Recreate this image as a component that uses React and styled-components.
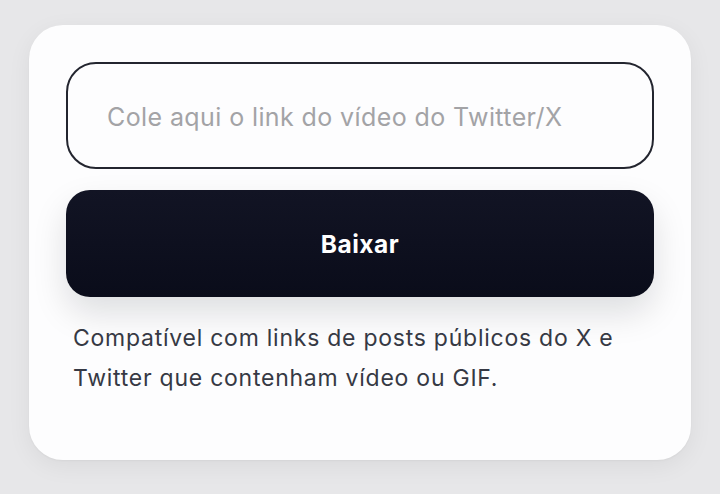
import React, { useState } from 'react';
import styled, { createGlobalStyle } from 'styled-components';

const GlobalStyle = createGlobalStyle`
  html, body {
    margin: 0;
    padding: 0;
    background: #e7e7e9;
    font-family: Inter, "Noto Sans", sans-serif;
  }
  * { box-sizing: border-box; }
`;

const Page = styled.div`
  width: 720px;
  height: 494px;
  padding: 25px 29px 34px;
`;

const Card = styled.div`
  height: 435px;
  background: #fdfdfe;
  border-radius: 34px;
  box-shadow: 0 6px 24px rgba(0, 0, 0, 0.06), 0 1px 2px rgba(0, 0, 0, 0.04);
  padding: 37px 37px 0;
  display: flex;
  flex-direction: column;
`;

const Input = styled.input`
  height: 107px;
  width: 100%;
  border: 2px solid #23252f;
  border-radius: 30px;
  background: #fdfdfe;
  padding: 2px 0 0 39px;
  font-family: Inter, "Noto Sans", sans-serif;
  font-size: 25px;
  letter-spacing: 0.4px;
  color: #1a1c26;
  outline: none;

  &::placeholder {
    color: #a3a3a6;
  }
`;

const Button = styled.button`
  margin-top: 21px;
  height: 107px;
  width: 100%;
  border: none;
  border-radius: 24px;
  background: linear-gradient(180deg, #121424 0%, #0a0c1a 100%);
  color: #ffffff;
  font-family: Inter, "Noto Sans", sans-serif;
  font-weight: 700;
  font-size: 24.5px;
  letter-spacing: 0.5px;
  box-shadow: 0 16px 34px rgba(10, 12, 26, 0.13);
  cursor: pointer;
`;

const Hint = styled.p`
  margin: 21px 0 0 7px;
  font-size: 23px;
  letter-spacing: 0.75px;
  line-height: 40px;
  color: #363944;
`;

export default function App() {
  const [url, setUrl] = useState('');

  return (
    <>
      <GlobalStyle />
      <Page>
        <Card>
          <Input
            value={url}
            onChange={(e) => setUrl(e.target.value)}
            placeholder="Cole aqui o link do vídeo do Twitter/X"
          />
          <Button>Baixar</Button>
          <Hint>
            Compatível com links de posts públicos do X e
            <br />
            Twitter que contenham vídeo ou GIF.
          </Hint>
        </Card>
      </Page>
    </>
  );
}
